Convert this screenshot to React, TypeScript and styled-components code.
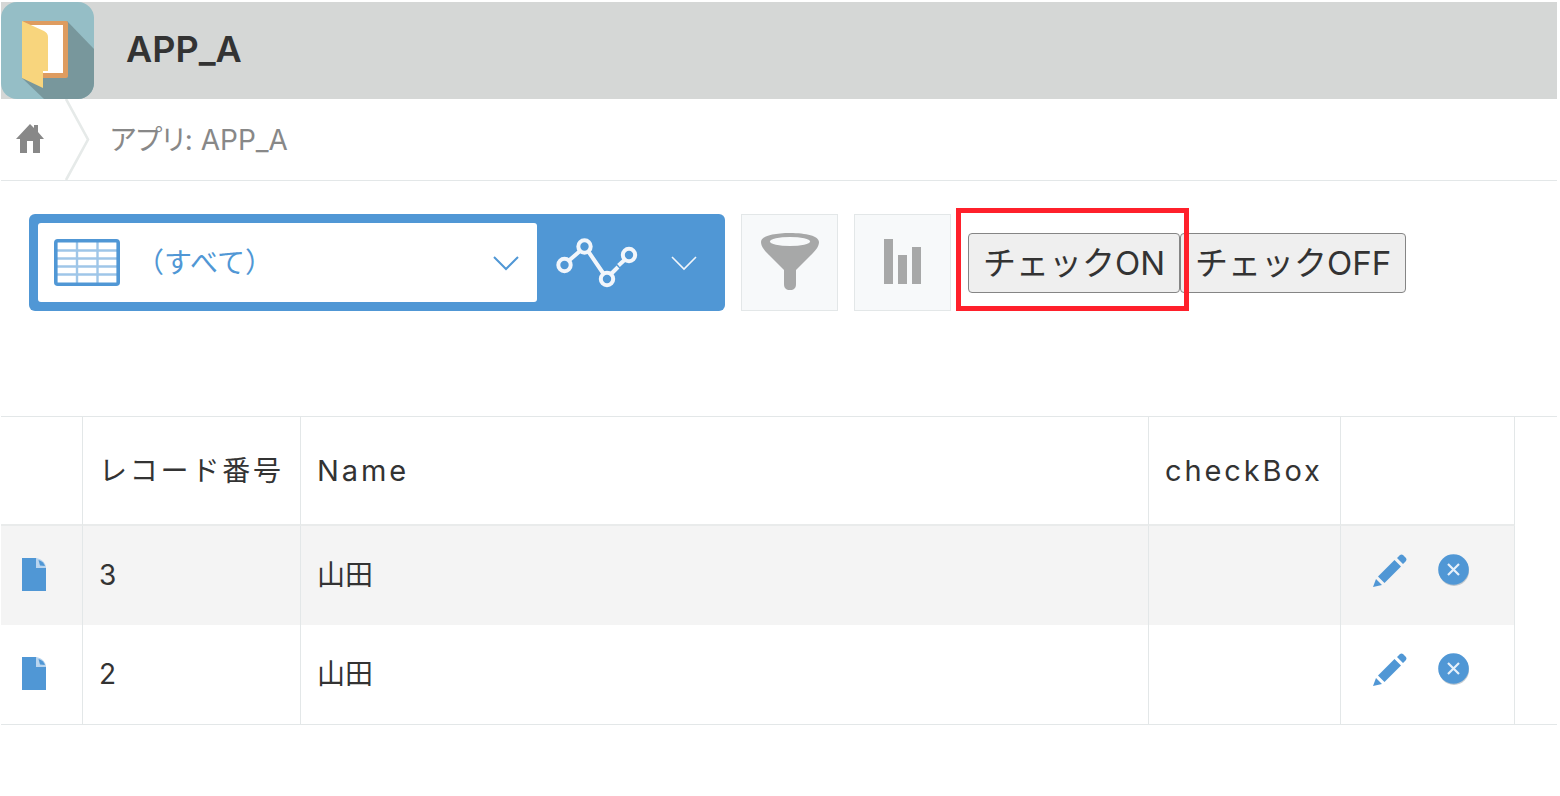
import React from 'react';
import styled, { createGlobalStyle } from 'styled-components';

const blue = '#5097d5';
const line = '#e3e7e8';
const ink = '#333333';

const GlobalStyle = createGlobalStyle`
  * { box-sizing: border-box; }
  body {
    margin: 0;
    padding: 2px 3px 0 1px;
    background: #ffffff;
    color: ${ink};
    font-family: Inter, "Noto Sans CJK JP", sans-serif;
    font-size: 28px;
    line-height: 40px;
  }
  button, select { font: inherit; color: inherit; cursor: pointer; }
  svg { display: block; flex: none; }
`;

const AppHeader = styled.header`
  display: flex;
  align-items: center;
  gap: 32px;
  height: 97px;
  background: #d5d7d6;
`;

const AppTitle = styled.h1`
  margin: 0;
  padding-bottom: 4px;
  font-size: 36px;
  font-weight: 600;
  line-height: 48px;
`;

const Breadcrumb = styled.nav`
  display: flex;
  align-items: center;
  height: 82px;
  border-bottom: 1px solid ${line};
  color: #888888;
`;

const HomeLink = styled.a`
  display: flex;
  padding: 0 21px 2px 15px;
`;

const Crumb = styled.a`
  padding-left: 20px;
  color: inherit;
  font-feature-settings: "palt";
  text-decoration: none;
`;

const Toolbar = styled.div`
  display: flex;
  align-items: center;
  gap: 16px;
  padding: 33px 28px 105px;
`;

const ViewSwitcher = styled.div`
  display: flex;
  width: 696px;
  height: 97px;
  padding: 9px;
  border-radius: 6px;
  background: ${blue};
`;

const ViewField = styled.label`
  display: flex;
  flex: 1;
  align-items: center;
  padding: 0 18px 0 16px;
  border-radius: 3px;
  background: #ffffff;
  color: ${blue};
`;

const ViewSelect = styled.select`
  flex: 1;
  min-width: 0;
  height: 48px;
  padding: 0 0 0 16px;
  border: 0;
  appearance: none;
  background: transparent;
`;

const GraphButton = styled.button`
  display: flex;
  align-items: center;
  gap: 33px;
  width: 179px;
  padding: 0 19px;
  border: 0;
  background: transparent;
  color: #f2f6fb;
`;

const ToolButton = styled.button`
  display: flex;
  align-items: center;
  justify-content: center;
  width: 97px;
  height: 97px;
  padding: 0 0 3px;
  border: 1px solid ${line};
  background: #f7f9fa;
  color: #a7a8a8;
`;

const CheckActions = styled.div`
  display: flex;
  padding-left: 1px;
`;

const CheckButton = styled.button`
  height: 60px;
  padding: 0 14px;
  border: 1px solid #858585;
  border-radius: 4px;
  background: #efefef;
  font-size: 33px;
  line-height: 48px;
  white-space: nowrap;
`;

const Highlight = styled.div`
  position: relative;
  display: flex;

  &::after {
    content: "";
    position: absolute;
    z-index: 1;
    inset: -25px -9px -18px -12px;
    border: 5px solid #ff202b;
    pointer-events: none;
  }
`;

const TableArea = styled.main`
  padding-right: 42px;
  border-top: 1px solid ${line};
  border-bottom: 1px solid ${line};
`;

const RecordTable = styled.table`
  width: 100%;
  border-collapse: separate;
  border-spacing: 0;
  table-layout: fixed;
`;

const Col = styled.col<{ $width?: number }>`
  width: ${({ $width }) => ($width ? `${$width}px` : 'auto')};
`;

const HeadCell = styled.th<{ $latin?: boolean }>`
  height: 109px;
  padding: 0 16px;
  border-right: 1px solid ${line};
  border-bottom: 2px solid #e9ebeb;
  font-size: ${({ $latin }) => ($latin ? '29px' : '28px')};
  font-weight: 400;
  letter-spacing: 0.1em;
  text-align: left;
  white-space: nowrap;
`;

const Row = styled.tr`
  &:nth-child(odd) { background: #f4f4f4; }
`;

const Cell = styled.td`
  height: 99px;
  padding: 0 16px 2px;
  border-right: 1px solid ${line};
`;

const IconCell = styled(Cell)`
  padding: 0 21px 2px;
`;

const RecordLink = styled.a`
  display: block;
  color: ${blue};
`;

const RowActions = styled.div`
  display: flex;
  align-items: center;
  gap: 31px;
  padding: 0 0 8px 16px;
`;

const IconButton = styled.button`
  display: flex;
  padding: 0;
  border: 0;
  background: transparent;
  color: ${blue};
`;

const AppIcon = () => (
  <svg width="93" height="97" viewBox="0 0 93 97" aria-hidden="true">
    <defs>
      <clipPath id="app-icon"><rect width="93" height="97" rx="16" /></clipPath>
    </defs>
    <g clipPath="url(#app-icon)">
      <rect width="93" height="97" fill="#95bec6" />
      <path d="M66 19 93 47V97H43L21 76Z" fill="#78979c" />
      <rect x="21" y="19" width="46" height="57" rx="2" fill="#de9c60" />
      <path d="M24 23H62V71H24Z" fill="#ffffff" />
      <path d="M21 19 43 29Q47 31 47 35V69H42V86L21 76Z" fill="#f8d57d" />
    </g>
  </svg>
);

const HomeIcon = () => (
  <svg width="28" height="30" viewBox="0 0 28 30" aria-hidden="true">
    <path d="M14 0 18 4V1H22V8L28 15H24V29H17V17H11V29H4V15H0Z" fill="#888888" />
  </svg>
);

const CrumbDivider = () => (
  <svg width="25" height="81" viewBox="0 0 25 81" fill="none" stroke="#e6eae9" strokeWidth="2.6" aria-hidden="true">
    <path d="M1 0 23 40.500 1 81" />
  </svg>
);

const TableIcon = () => (
  <svg width="66" height="47" viewBox="0 0 66 47" fill="none" stroke={blue} aria-hidden="true">
    <path d="M23 3V44M43.500 3V44M3 11.500H63M3 19.500H63M3 27.500H63M3 35.500H63" strokeWidth="2.400" opacity=".55" />
    <rect x="1.800" y="1.800" width="62.400" height="43.400" rx="2" strokeWidth="3.600" />
  </svg>
);

const Chevron = ({ strokeWidth = 2 }: { strokeWidth?: number }) => (
  <svg width="26" height="16" viewBox="0 0 26 16" fill="none" stroke="currentColor" strokeWidth={strokeWidth} aria-hidden="true">
    <path d="M1 2 13 14 25 2" />
  </svg>
);

const GraphIcon = () => (
  <svg width="82" height="50" viewBox="0 0 82 50" fill="none" stroke="currentColor" strokeWidth="4" aria-hidden="true">
    <path d="M13 22.500 24 13M32 13 47 35M55 36 62 29" />
    <path d="M62.500 27.500 69 21.500" />
    <circle cx="8.500" cy="27" r="6.200" />
    <circle cx="28.500" cy="8.500" r="6.200" />
    <circle cx="51" cy="41" r="6.200" />
    <circle cx="73" cy="17" r="6.200" />
  </svg>
);

const FilterIcon = () => (
  <svg width="58" height="57" viewBox="0 0 58 57" aria-hidden="true">
    <path d="M0 9C0 3 13 0 29 0S58 3 58 9C58 13 55 17 52 20L35 37V51C35 55 33 57 29 57S23 55 23 51V37L6 20C3 17 0 13 0 9Z" fill="currentColor" />
    <ellipse cx="29" cy="8.500" rx="20" ry="4.500" fill="#f7f9fa" />
  </svg>
);

const BarsIcon = () => (
  <svg width="37" height="45" viewBox="0 0 37 45" fill="currentColor" aria-hidden="true">
    <path d="M0 0H9V45H0ZM14 16H23V45H14ZM28 8H37V45H28Z" />
  </svg>
);

const RecordIcon = () => (
  <svg width="24" height="33" viewBox="0 0 24 33" aria-hidden="true">
    <path d="M0 0H14L24 10V33H0Z" fill="currentColor" />
    <path d="M14 0C20 1 24 5 24 10H14Z" fill="#b9d5ef" />
    <path d="M16.500 2C20 3 22 5 23 8L18 7.500Z" fill="currentColor" />
  </svg>
);

const PencilIcon = () => (
  <svg width="34" height="34" viewBox="0 0 34 34" fill="currentColor" aria-hidden="true">
    <path d="M0 33 3 25 9 31ZM5 22.500 21.500 6 28 12.500 11.500 29ZM24 4 27 1Q28.500 0 30 1L33 4Q34 5.500 33 7L30 10Z" />
  </svg>
);

const DeleteIcon = () => (
  <svg width="32" height="33" viewBox="0 0 32 33" aria-hidden="true">
    <circle cx="16" cy="17" r="15" fill="#9aa7b3" opacity=".6" />
    <circle cx="15.500" cy="15.500" r="15.300" fill="currentColor" />
    <path d="M10 10 21 21M21 10 10 21" stroke="#e6f0fa" strokeWidth="2.200" />
  </svg>
);

const records = [
  { id: 3, name: '山田', checkBox: '' },
  { id: 2, name: '山田', checkBox: '' },
];

export default function App() {
  return (
    <>
      <GlobalStyle />
      <AppHeader>
        <AppIcon />
        <AppTitle>APP_A</AppTitle>
      </AppHeader>
      <Breadcrumb>
        <HomeLink href="#home" aria-label="Home"><HomeIcon /></HomeLink>
        <CrumbDivider />
        <Crumb href="#app">アプリ: APP_A</Crumb>
      </Breadcrumb>
      <Toolbar>
        <ViewSwitcher>
          <ViewField>
            <TableIcon />
            <ViewSelect aria-label="View" defaultValue="all">
              <option value="all">（すべて）</option>
            </ViewSelect>
            <Chevron />
          </ViewField>
          <GraphButton type="button" aria-label="Graph">
            <GraphIcon />
            <Chevron strokeWidth={1.6} />
          </GraphButton>
        </ViewSwitcher>
        <ToolButton type="button" aria-label="Filter"><FilterIcon /></ToolButton>
        <ToolButton type="button" aria-label="Chart"><BarsIcon /></ToolButton>
        <CheckActions>
          <Highlight>
            <CheckButton type="button">チェックON</CheckButton>
          </Highlight>
          <CheckButton type="button">チェックOFF</CheckButton>
        </CheckActions>
      </Toolbar>
      <TableArea>
        <RecordTable>
          <colgroup>
            <Col $width={82} />
            <Col $width={218} />
            <Col />
            <Col $width={192} />
            <Col $width={174} />
          </colgroup>
          <thead>
            <tr>
              <HeadCell aria-label="Record" />
              <HeadCell>レコード番号</HeadCell>
              <HeadCell $latin>Name</HeadCell>
              <HeadCell $latin>checkBox</HeadCell>
              <HeadCell aria-label="Actions" />
            </tr>
          </thead>
          <tbody>
            {records.map((record) => (
              <Row key={record.id}>
                <IconCell>
                  <RecordLink href={`#record-${record.id}`} aria-label={`Record ${record.id}`}><RecordIcon /></RecordLink>
                </IconCell>
                <Cell>{record.id}</Cell>
                <Cell>{record.name}</Cell>
                <Cell>{record.checkBox}</Cell>
                <Cell>
                  <RowActions>
                    <IconButton type="button" aria-label="Edit"><PencilIcon /></IconButton>
                    <IconButton type="button" aria-label="Delete"><DeleteIcon /></IconButton>
                  </RowActions>
                </Cell>
              </Row>
            ))}
          </tbody>
        </RecordTable>
      </TableArea>
    </>
  );
}
